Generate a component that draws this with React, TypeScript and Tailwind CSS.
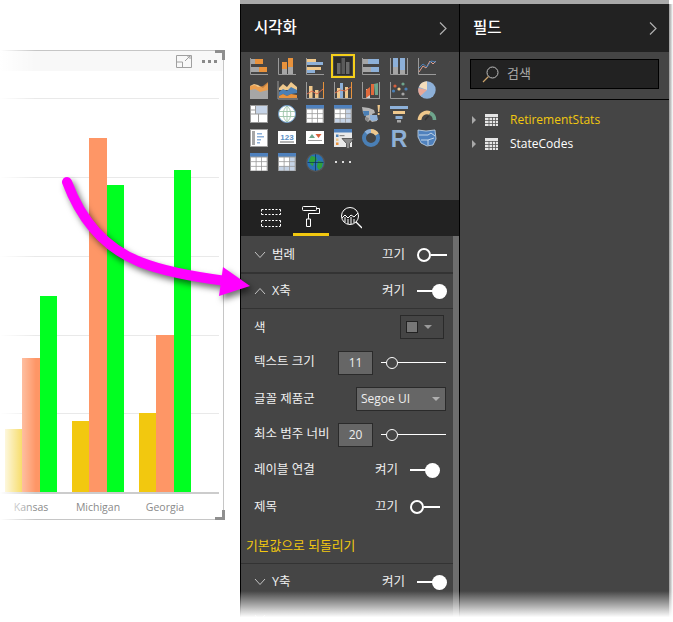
import type { ReactNode } from 'react'

const OR = '#e8923c'
const GR = '#a6a6a6'
const BL = '#8db0d8'
const TN = '#efc88c'
const DB = '#4a7fb5'
const AX = '#9a9a9a'

const Axis = () => <path d="M.5 1v16.5H18" fill="none" stroke={AX} />

function R({ x, y, w, h, c }: { x: number; y: number; w: number; h: number; c: string }) {
  return <rect x={x} y={y} width={w} height={h} fill={c} />
}

function TableIcon({ shaded, head = true }: { shaded?: boolean; head?: boolean }) {
  const cells = []
  for (let r = 0; r < 3; r++) {
    for (let c = 0; c < 3; c++) {
      const tint = shaded && (r === 2 || c === 2)
      cells.push(<R key={`${r}-${c}`} x={1 + c * 5.5} y={4.5 + r * 4.6} w={4.7} h={3.8} c={tint ? '#c5d3e6' : '#ffffff'} />)
    }
  }
  return (
    <>
      <R x={0} y={0} w={18} h={18} c="#9a9a9a" />
      {head && <R x={0} y={0} w={18} h={3.5} c="#4f81bd" />}
      {cells}
    </>
  )
}

const icons: ReactNode[] = [
  <><Axis /><R x={1} y={2} w={4} h={5} c={GR} /><R x={5} y={2} w={8} h={5} c={OR} /><R x={1} y={10} w={8} h={5} c={GR} /><R x={9} y={10} w={8} h={5} c={OR} /></>,
  <><Axis /><R x={4} y={12} w={5} h={5} c={GR} /><R x={4} y={5} w={5} h={7} c={OR} /><R x={10} y={10} w={5} h={7} c={GR} /><R x={10} y={1} w={5} h={9} c={OR} /></>,
  <><Axis /><R x={1} y={2} w={9} h={3} c={TN} /><R x={1} y={5} w={16} h={3} c={BL} /><R x={1} y={10} w={14} h={3} c={TN} /><R x={1} y={13} w={8} h={3} c={BL} /></>,
  <><R x={3} y={6} w={3.5} h={11} c="#6a6a6a" /><R x={7.5} y={1} w={3.5} h={16} c="#5a5a5a" /><R x={12} y={5} w={3.5} h={12} c="#6a6a6a" /></>,
  <><Axis /><R x={1} y={2} w={5} h={5} c={GR} /><R x={6} y={2} w={11} h={5} c={BL} /><R x={1} y={10} w={8} h={5} c={GR} /><R x={9} y={10} w={8} h={5} c={BL} /></>,
  <><Axis /><path d="M17.5 1v16" stroke={AX} /><R x={3} y={1} w={5} h={9} c={BL} /><R x={3} y={10} w={5} h={7} c={GR} /><R x={10} y={1} w={5} h={12} c={BL} /><R x={10} y={13} w={5} h={4} c={GR} /></>,
  <><Axis /><path d="M1 15l4-6 3 2 4-7 3 3 3-3" fill="none" stroke="#e0a090" /><path d="M1 11l4-4 4 3 4-6 5 1" fill="none" stroke={DB} /></>,

  <><path d="M0 5l4-2 4 1 5 3 5-5v10H0z" fill={TN} /><path d="M0 12V5l5-1 3 2 5-1 5-4v11z" fill={OR} opacity=".75" /><path d="M0 18V9l5-1 5 3 8-2v9z" fill={GR} /></>,
  <><path d="M0 0v18h20" fill="none" stroke={AX} /><path d="M1 7l4-4 4 3 4-5 6 5v3H1z" fill={TN} /><path d="M1 11l4-3 4 2 4-4 6 3v3l-6 1-4 2-4-2-4 2z" fill={DB} /><path d="M1 15l4-2 4 2 4-2 6 1v3H1z" fill={OR} /></>,
  <><Axis /><path d="M17.5 1v16" stroke={OR} /><R x={3} y={5} w={3.5} h={12} c={TN} /><R x={9} y={9} w={3.5} h={8} c={TN} /><path d="M1 13l5-3 5 3 6-5" fill="none" stroke="#e07050" /></>,
  <><Axis /><path d="M17.5 1v16" stroke={OR} /><R x={3} y={7} w={3} h={10} c={TN} /><R x={6} y={2} w={3} h={15} c={BL} /><R x={11} y={6} w={3} h={11} c={TN} /><path d="M1 12l5-3 5 1 6-4" fill="none" stroke="#e07050" /></>,
  <><Axis /><path d="M17.5 1v16" stroke={AX} /><R x={4} y={8} w={4} h={9} c="#d0d0d0" /><path d="M4 9l4-3v8l-4 3z" fill="#e06a3c" /><path d="M9 14V3h3v11z" fill="#e06a3c" /><path d="M12 3l4-1v12h-3z" fill="#6ea58c" /></>,
  <><Axis /><circle cx="5" cy="5" r="1.6" fill="#d9603c" /><circle cx="13" cy="3" r="1.6" fill="#6ea58c" /><circle cx="3.5" cy="10" r="1.6" fill={DB} /><circle cx="9" cy="8" r="1.6" fill={TN} /><circle cx="16" cy="8" r="1.6" fill={DB} /><circle cx="13" cy="13" r="1.6" fill={GR} /></>,
  <><circle cx="9" cy="9" r="8.7" fill={BL} /><path d="M9 9V.3A8.7 8.7 0 0 0 1 6z" fill="#f3ddbb" /><path d="M9 9L.5 7a8.7 8.7 0 0 0 2 8z" fill="#e8a898" /></>,

  <><R x={0} y={0} w={18} h={18} c="#9a9a9a" /><R x={1} y={1} w={4} h={3.5} c="#fff" /><R x={1} y={5.5} w={4} h={3} c="#fff" /><R x={6} y={1} w={11} h={7.5} c="#c5d3e6" /><R x={1} y={9.5} w={7} h={7.5} c="#fff" /><R x={9} y={9.5} w={8} h={7.5} c="#fff" /></>,
  <><circle cx="9" cy="9" r="8.5" fill="#ffffff" stroke="#6f9ec9" /><path d="M9 1c-5 4-5 12 0 16M9 1c5 4 5 12 0 16M1 6.5h16M1 11.5h16M9 1v16" fill="none" stroke="#9cc3a8" strokeWidth=".9" /></>,
  <TableIcon />,
  <TableIcon shaded />,
  <><path d="M0 2l7 1 5 2 1 3-3 1 1 3 4 0 0 4-5 1-2-2-2 2-3-3 1-3-3-3z" fill="#b5b5b5" /><path d="M1 6h6v4l-5 1z" fill={DB} /><path d="M8 10h7l1 5-6 1-2-2z" fill={BL} /><path d="M4 12l3 1-1 4-3-2z" fill="#8a8a8a" /><path d="M15.5 0H18l-.7 7h-1.2z" fill={TN} /><R x={15.8} y={8} w={1.8} h={2} c={TN} /></>,
  <><R x={0} y={1} w={18} h={3} c={BL} /><R x={3} y={6} w={12} h={3} c={TN} /><R x={5.5} y={11} w={7} h={3} c={BL} /><R x={7} y={15} w={4} h={2.5} c={GR} /></>,
  <><path d="M1.5 15A7.5 7.5 0 0 1 12 8" fill="none" stroke={TN} strokeWidth="3.6" /><path d="M12 8A7.5 7.500 0 0 1 16.500 15" fill="none" stroke="#6ea58c" strokeWidth="3.6" /><path d="M7 15l3.500-4" stroke="#333" strokeWidth="1.5" /></>,

  <><R x={0} y={0} w={18} h={18} c="#a0a0a0" /><R x={1} y={1} w={16} h={16} c="#fff" /><R x={2} y={2} w={3} h={14} c={GR} /><R x={7} y={4} w={5} h={1.5} c={BL} /><R x={7} y={7} w={7} h={1.5} c={BL} /><R x={7} y={10} w={4} h={1.5} c={BL} /><R x={7} y={13} w={3} h={1.5} c={BL} /></>,
  <><R x={0} y={2} w={18} h={13} c="#fff" /><text x="9" y="10.5" textAnchor="middle" fontSize="8" fontWeight="700" fontFamily="'Liberation Sans', sans-serif" fill="#5b8fc4">123</text><R x={2} y={12.5} w={14} h={1} c="#666" /></>,
  <><R x={0} y={2} w={18} h={13} c="#fff" /><path d="M3 9l3-4 3 4z" fill="#6ea58c" /><path d="M9.5 5h6l-3 4z" fill="#d9603c" /><R x={2} y={11} w={14} h={1} c="#999" /></>,
  <><R x={0} y={0} w={18} h={18} c="#e9e9e9" /><R x={0} y={0} w={18} h={3.5} c="#4f81bd" /><R x={2} y={5.5} w={2.5} h={2.5} c={DB} /><R x={2} y={9.5} w={2.5} h={2.5} c={TN} /><R x={2} y={13.5} w={2.5} h={2.5} c={OR} /><R x={5.5} y={6} w={5} h={1.2} c="#888" /><path d="M8 9.5h12l-4.5 5v5h-3v-5z" fill="#8a8a8a" stroke="#454545" strokeWidth=".8" /></>,
  <><circle cx="9" cy="9" r="7" fill="none" stroke={DB} strokeWidth="4" /><path d="M9 2a7 7 0 0 1 6 3.5" fill="none" stroke={TN} strokeWidth="4" /><path d="M9 2a7 7 0 0 0-5 2" fill="none" stroke={BL} strokeWidth="4" /></>,
  <text x="9" y="18" textAnchor="middle" fontSize="23" fontWeight="700" fontFamily="'Liberation Sans', sans-serif" fill="#8fb0d6">R</text>,
  <><path d="M0 1l8 1 9-1 1 9-3 6-6 1-6-3-3-6z" fill="#4f81bd" stroke="#c5d8ea" strokeWidth=".8" /><path d="M1 6h9l3-2 4 3M3 11h7v5M10 11l6-2" fill="none" stroke="#dce8f2" strokeWidth=".8" /></>,

  <TableIcon />,
  <TableIcon shaded />,
  <><circle cx="9.5" cy="9.5" r="9.5" fill="#555" /><circle cx="9.5" cy="9.5" r="8.3" fill="#2a72b5" /><path d="M5 3l5 1 1 3-3 2-1 4-2-1-2-4zM12 8l5 1-1 5-3 3-2-3z" fill="#2fa13a" /><path d="M9.5 1.2v16.6M1.5 9.5h16" stroke="#0c2f4f" strokeWidth=".7" /></>,
  <><R x={1} y={8} w={2} h={2} c="#ddd" /><R x={8} y={8} w={2} h={2} c="#ddd" /><R x={15} y={8} w={2} h={2} c="#ddd" /></>,
]

function Chevron({ up, className }: { up?: boolean; className?: string }) {
  return (
    <svg width="12" height="8" viewBox="0 0 12 8" className={className}>
      <path d={up ? 'M1 7l5-5.5L11 7' : 'M1 1l5 5.5L11 1'} fill="none" stroke="#c4c4c4" strokeWidth="1" />
    </svg>
  )
}

function HeaderChevron() {
  return (
    <svg width="8" height="13" viewBox="0 0 8 13">
      <path d="M1 .5l6 6-6 6" fill="none" stroke="#b0b0b0" strokeWidth="1.2" />
    </svg>
  )
}

function Toggle({ on }: { on?: boolean }) {
  return (
    <span className="flex h-[16px] w-[30px] items-center">
      {on ? (
        <>
          <span className="h-[2px] w-[16px] bg-white" />
          <span className="h-[15px] w-[15px] -ml-[1px] rounded-full bg-white" />
        </>
      ) : (
        <>
          <span className="h-[14px] w-[14px] rounded-full border-2 border-white" />
          <span className="h-[2px] w-[16px] bg-white" />
        </>
      )}
    </span>
  )
}

function Slider() {
  return (
    <span className="flex h-[14px] w-[65px] items-center">
      <span className="h-px w-[5px] bg-white" />
      <span className="h-[12px] w-[12px] rounded-full border border-white" />
      <span className="h-px flex-1 bg-white" />
    </span>
  )
}

function NumberBox({ value }: { value: string }) {
  return (
    <span className="flex h-[24px] w-[35px] items-center justify-center border border-[#2a2a2a] bg-[#666666] text-[12px] text-[#eeeeee]">
      {value}
    </span>
  )
}

function SectionRow({ title, state, on, open, line }: { title: string; state: string; on: boolean; open?: boolean; line: string }) {
  return (
    <div className={`flex items-center pl-[13px] pr-[6px] ${line}`}>
      <Chevron up={open} className="mr-[6px]" />
      <span className="flex-1 text-[12.5px] text-[#f0f0f0]">{title}</span>
      <span className="mr-[12px] text-[12.5px] text-[#f0f0f0]">{state}</span>
      <Toggle on={on} />
    </div>
  )
}

function LabelToggle({ label, state, on, h }: { label: string; state: string; on: boolean; h: string }) {
  return (
    <div className={`flex items-center pl-[13px] pr-[13px] ${h}`}>
      <span className="flex-1 text-[12.5px] text-[#f0f0f0]">{label}</span>
      <span className="mr-[12px] text-[12.5px] text-[#f0f0f0]">{state}</span>
      <Toggle on={on} />
    </div>
  )
}

function SliderRow({ label, value, h }: { label: string; value: string; h: string }) {
  return (
    <div className={`flex items-center pl-[13px] pr-[7px] ${h}`}>
      <span className="w-[84px] whitespace-nowrap text-[12.5px] text-[#f0f0f0]">{label}</span>
      <NumberBox value={value} />
      <span className="ml-auto">
        <Slider />
      </span>
    </div>
  )
}

const bars = [
  { name: 'Kansas', y: 63, o: 134, g: 196 },
  { name: 'Michigan', y: 71, o: 354, g: 307 },
  { name: 'Georgia', y: 79, o: 157, g: 322 },
]

function Chart() {
  return (
    <div className="relative mt-[50px] h-[470px] w-[224px] border-y border-r border-[#c6c6c6] bg-white">
      <div className="flex h-[20px] items-center justify-end gap-[10px] bg-[#f8f8f8] pr-[6px]">
        <svg width="16" height="13" viewBox="0 0 16 13">
          <path d="M.5 6V.5h15v12H.5V6M.5 7h6v5.5M9 6l5-5M11 1h3v3" fill="none" stroke="#a0a0a0" />
        </svg>
        <svg width="15" height="3" viewBox="0 0 15 3">
          <rect x="0" width="3" height="3" fill="#8a8a8a" />
          <rect x="6" width="3" height="3" fill="#8a8a8a" />
          <rect x="12" width="3" height="3" fill="#8a8a8a" />
        </svg>
      </div>
      <div className="relative flex h-[423px] items-end gap-[15px] border-b-2 border-[#cccccc] pl-[5px] mr-[4px]">
        {[98, 177, 256, 335, 413].map((y) => (
          <span key={y} className="absolute left-0 right-0 h-px bg-[#e9e9e9]" style={{ top: y - 71 }} />
        ))}
        {bars.map((b) => (
          <div key={b.name} className="relative flex w-[52px] items-end">
            <span className="flex-1 bg-[#f2c80f]" style={{ height: b.y }} />
            <span className="flex-1 bg-[#fe9666]" style={{ height: b.o }} />
            <span className="flex-1 bg-[#00ff21]" style={{ height: b.g }} />
          </div>
        ))}
      </div>
      <div className="flex gap-[15px] pl-[5px] pt-[6px]">
        {bars.map((b) => (
          <span key={b.name} className="w-[52px] whitespace-nowrap text-center text-[10.5px] leading-[15px] text-[#8a8a8a]">
            {b.name}
          </span>
        ))}
      </div>
      <span className="absolute -right-[2px] -top-px h-[10px] w-[10px] bg-[#8f8f8f] [clip-path:polygon(0_0,100%_0,100%_100%,70%_100%,70%_30%,0_30%)]" />
      <span className="absolute -bottom-px -right-[2px] h-[10px] w-[10px] bg-[#8f8f8f] [clip-path:polygon(70%_0,100%_0,100%_100%,0_100%,0_70%,70%_70%)]" />
      <span className="absolute -bottom-px -top-px left-0 w-[36px] bg-gradient-to-r from-white to-transparent" />
    </div>
  )
}

function VizPanel() {
  return (
    <div className="flex min-h-0 w-[219px] flex-col overflow-hidden border-l border-black bg-[#454545]">
      <div className="flex h-[48px] shrink-0 items-center justify-between bg-[#222222] pl-[13px] pr-[12px]">
        <span className="text-[15.5px] font-medium text-white">시각화</span>
        <HeaderChevron />
      </div>
      <div className="grid h-[148px] shrink-0 grid-cols-[repeat(7,18px)] grid-rows-[repeat(5,18px)] gap-x-[10px] gap-y-[6px] pl-[9px] pt-[5px]">
        {icons.map((icon, i) => (
          <div key={i} className={i === 3 ? 'relative flex h-[18px] w-[18px] items-center justify-center outline-2 outline-offset-[1px] outline-[#f5cf1a] bg-[#2b2b2b]' : 'h-[18px] w-[18px]'}>
            <svg width="18" height="18" viewBox="0 0 18 18" className="overflow-visible">
              {icon}
            </svg>
          </div>
        ))}
      </div>
      <div className="flex h-[36px] shrink-0 items-center gap-[20px] bg-[#222222] pl-[20px]">
        <svg width="20" height="20" viewBox="0 0 20 20">
          <path d="M.5 1.5h19M.5 6.5h19M.5 12.5h19M.5 18.5h19M.5 1.5v5M19.5 1.5v5M.5 12.5v6M19.5 12.5v6" fill="none" stroke="#fff" strokeDasharray="2 1.5" />
        </svg>
        <span className="relative flex h-[36px] w-[36px] -mx-[8px] items-center justify-center border-b-[3px] border-[#f2c80f]">
          <svg width="18" height="21" viewBox="0 0 18 21">
            <path d="M1.5.5h12a1 1 0 0 1 1 1v2a1 1 0 0 1-1 1h-12a1 1 0 0 1-1-1v-2a1 1 0 0 1 1-1zM14.5 2.5h3v5H6.5V13M4.5 13h4v7.5h-4z" fill="none" stroke="#fff" />
          </svg>
        </span>
        <svg width="21" height="22" viewBox="0 0 21 22">
          <circle cx="9" cy="9" r="8.5" fill="none" stroke="#fff" />
          <path d="M1 11l3-3 3 3 3-3 3 2 4-4M4 10v5M7 12v5M10 10v7M13 12v4" fill="none" stroke="#fff" />
          <path d="M15 15l6 6" stroke="#fff" strokeWidth="1.3" />
        </svg>
      </div>
      <div className="flex min-h-0 flex-1">
        <div className="w-[212px] shrink-0 pt-[2px]">
          <SectionRow title="범례" state="끄기" on={false} line="h-[36px] border-b-2 border-[#333333]" />
          <SectionRow title="X축" state="켜기" on open line="h-[35px] border-b border-[#333333]" />
          <div className="flex h-[36px] items-center justify-between pl-[13px] pr-[9px]">
            <span className="pt-[3px] text-[12.5px] text-[#f0f0f0]">색</span>
            <span className="flex h-[24px] w-[44px] items-center gap-[6px] border border-[#2a2a2a] pl-[5px]">
              <span className="h-[12px] w-[12px] border border-[#222222] bg-[#777777]" />
              <span className="h-0 w-0 border-x-[4px] border-t-[4px] border-x-transparent border-t-[#9a9a9a]" />
            </span>
          </div>
          <SliderRow label="텍스트 크기" value="11" h="h-[35px]" />
          <div className="flex h-[38px] items-center justify-between pl-[13px] pr-[7px]">
            <span className="text-[12.5px] text-[#f0f0f0]">글꼴 제품군</span>
            <span className="flex h-[24px] w-[90px] items-center justify-between border border-[#2a2a2a] bg-[#666666] pl-[4px] pr-[5px] text-[12px] text-[#eeeeee]">
              Segoe UI
              <span className="h-0 w-0 border-x-[4px] border-t-[4px] border-x-transparent border-t-[#b0b0b0]" />
            </span>
          </div>
          <SliderRow label="최소 범주 너비" value="20" h="h-[33px]" />
          <LabelToggle label="레이블 연결" state="켜기" on h="h-[38px]" />
          <LabelToggle label="제목" state="끄기" on={false} h="h-[36px]" />
          <div className="flex h-[39px] items-center border-b border-[#333333] pl-[5px] pt-[3px] text-[12.8px] text-[#f2c80f]">기본값으로 되돌리기</div>
          <SectionRow title="Y축" state="켜기" on line="h-[36px]" />
          <div className="flex h-[36px] items-center pl-[13px]">
            <Chevron />
          </div>
        </div>
        <div className="w-[6px] bg-[#6e6e6e]" />
      </div>
    </div>
  )
}

function FieldRow({ name, active }: { name: string; active?: boolean }) {
  return (
    <div className="flex h-[24px] items-center pl-[12px]">
      <span className="mr-[9px] h-0 w-0 border-y-[4px] border-l-[4px] border-y-transparent border-l-[#a8a8a8]" />
      <svg width="13" height="12" viewBox="0 0 13 12" className="mr-[12px]">
        <rect width="13" height="12" fill="#e6e6e6" />
        <path d="M0 3.5h13M0 6.5h13M0 9.5h13M4 3v9M7.5 3v9M10.5 3v9" stroke="#555" strokeWidth=".8" />
      </svg>
      <span className={`text-[12px] ${active ? 'text-[#f2c80f]' : 'text-white'}`}>{name}</span>
    </div>
  )
}

function FieldsPanel() {
  return (
    <div className="flex w-[210px] flex-col border-l border-black bg-[#454545]">
      <div className="flex h-[48px] items-center justify-between bg-[#222222] pl-[13px] pr-[12px]">
        <span className="text-[15.5px] font-medium text-white">필드</span>
        <HeaderChevron />
      </div>
      <div className="h-[48px] border-b border-black px-[10px] pt-[7px]">
        <div className="flex h-[30px] items-center gap-[8px] border border-black bg-[#222222] pl-[11px]">
          <svg width="17" height="17" viewBox="0 0 17 17">
            <circle cx="10.5" cy="6.5" r="5.5" fill="none" stroke="#c0c0c0" />
            <path d="M6.5 10.5L1 16" stroke="#c9a26a" strokeWidth="1.3" />
          </svg>
          <span className="text-[13px] text-[#a8a8a8]">검색</span>
        </div>
      </div>
      <div className="pt-[8px]">
        <FieldRow name="RetirementStats" active />
        <FieldRow name="StateCodes" />
      </div>
    </div>
  )
}

export default function App() {
  return (
    <div className="relative h-[622px] w-[673px] overflow-hidden bg-white font-['Open_Sans','Noto_Sans_CJK_KR',sans-serif]">
      <div className="flex h-full">
        <div className="w-[240px] shrink-0">
          <Chart />
        </div>
        <div className="flex w-[433px] flex-col">
          <div className="h-[4px] shrink-0 bg-[#a9a9a9] mr-[4px]" />
          <div className="flex min-h-0 flex-1">
            <VizPanel />
            <FieldsPanel />
            <div className="w-[4px] bg-gradient-to-r from-[#9a9a9a] to-white" />
          </div>
        </div>
      </div>

      {/* call-out arrow, sits over the chart */}
      <svg width="260" height="310" viewBox="0 0 260 310" className="absolute left-0 top-0 drop-shadow-[3px_4px_3px_rgba(0,0,0,0.55)]">
        <path d="M67 182C82 222 105 248 140 262C165 272 195 277 226 281" fill="none" stroke="#ff00ff" strokeWidth="10" strokeLinecap="round" />
        <path d="M223 267L250 286L219 296z" fill="#ff00ff" />
      </svg>

      {/* page fades out at the bottom */}
      <div className="absolute bottom-0 left-[240px] right-0 h-[31px] bg-gradient-to-b from-transparent to-white to-85%" />
    </div>
  )
}
